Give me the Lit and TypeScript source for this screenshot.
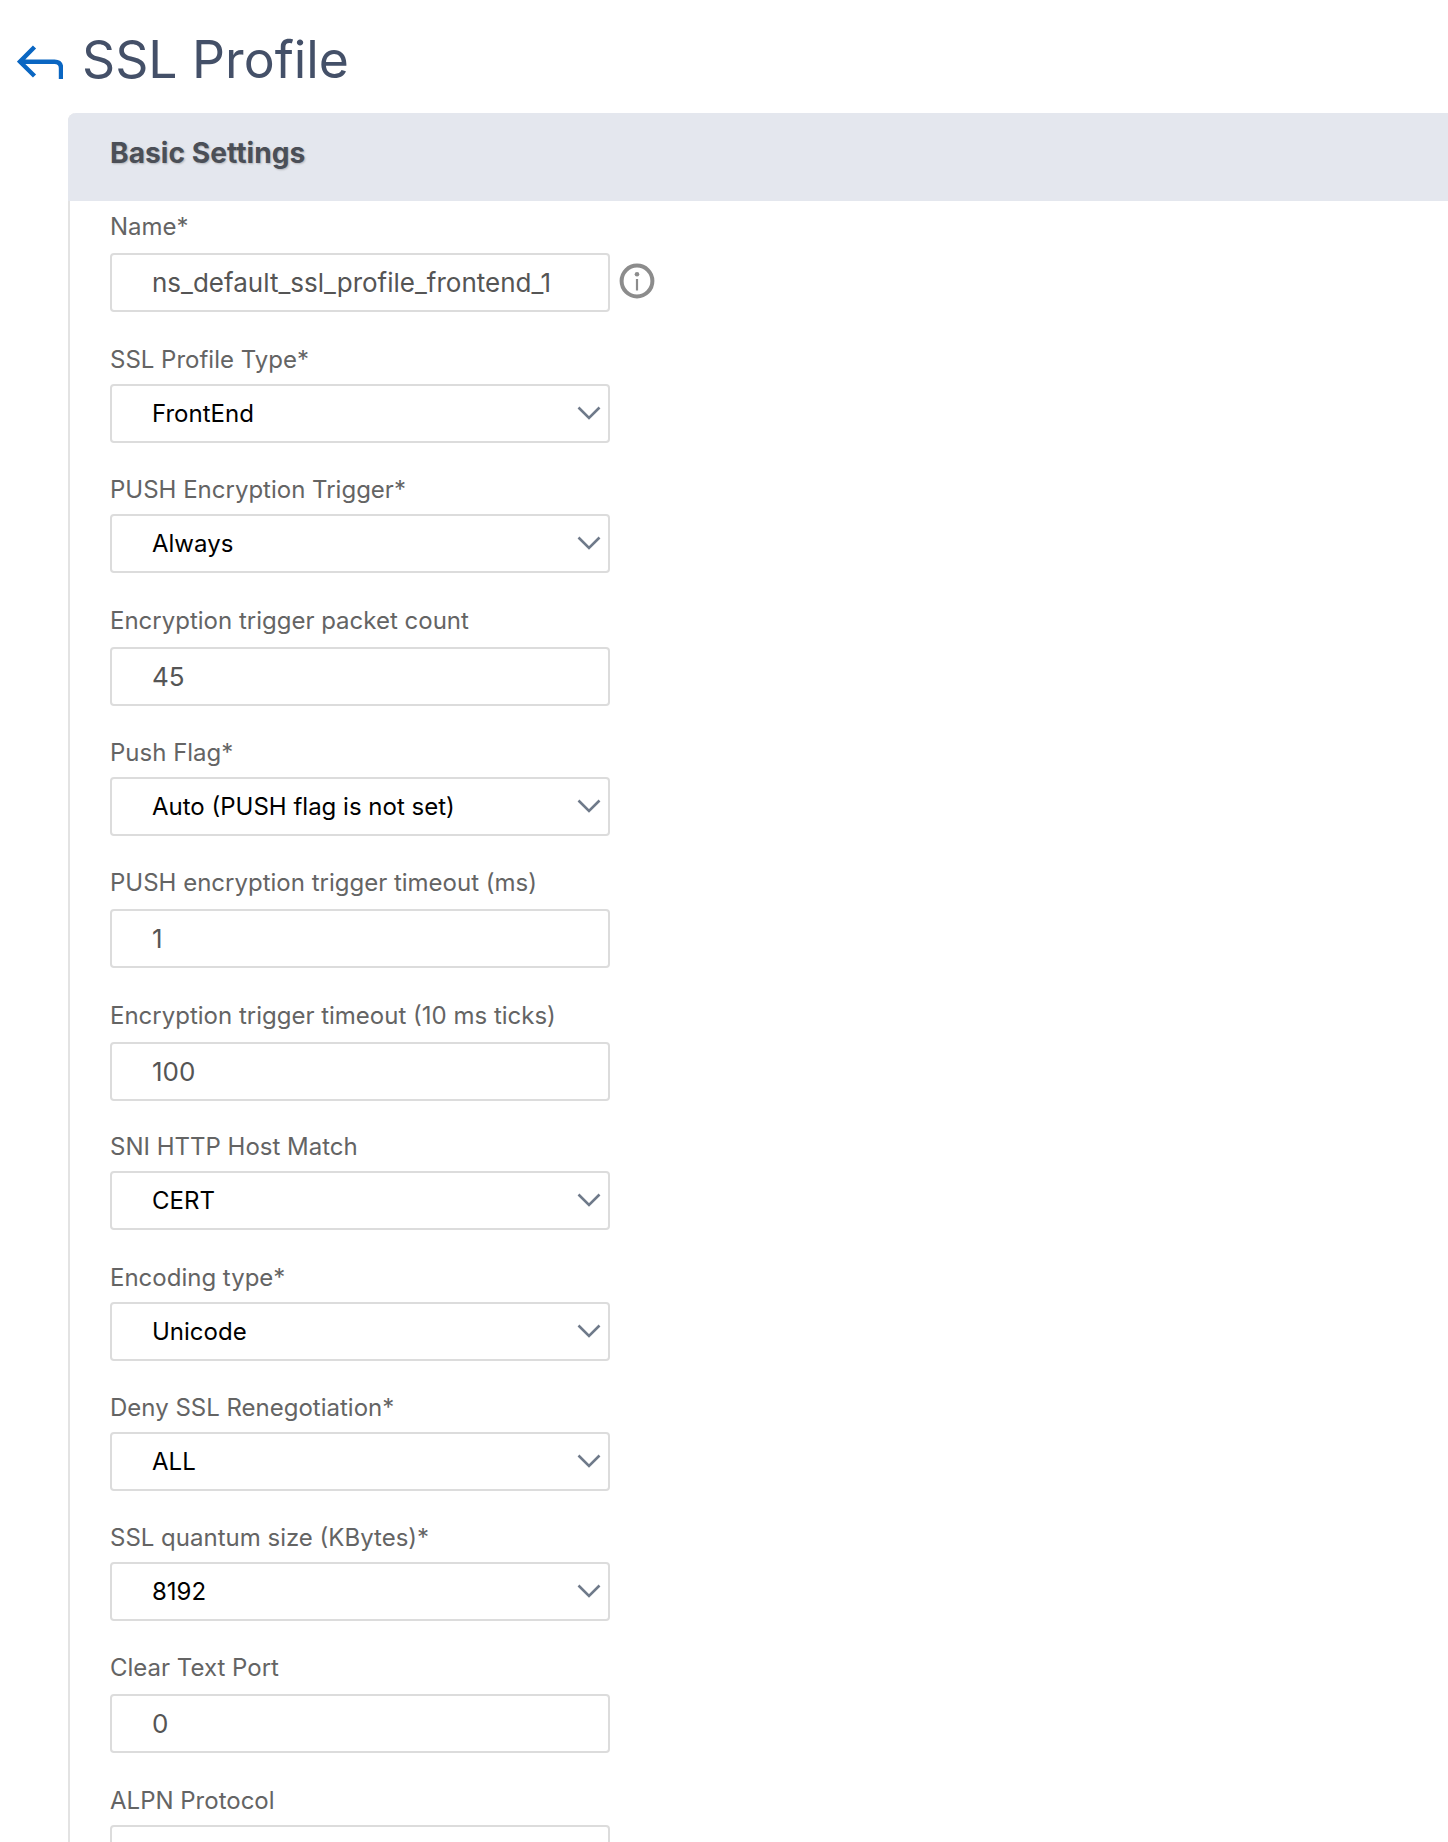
import { LitElement, html, css, svg } from "lit";
import { customElement } from "lit/decorators.js";

type Field = { label: string; value: string; kind: "input" | "select"; gap: number; info?: boolean };

const FIELDS: Field[] = [
  { label: "Name*", value: "ns_default_ssl_profile_frontend_1", kind: "input", gap: 0, info: true },
  { label: "SSL Profile Type*", value: "FrontEnd", kind: "select", gap: 32 },
  { label: "PUSH Encryption Trigger*", value: "Always", kind: "select", gap: 31 },
  { label: "Encryption trigger packet count", value: "45", kind: "input", gap: 32 },
  { label: "Push Flag*", value: "Auto (PUSH flag is not set)", kind: "select", gap: 31 },
  { label: "PUSH encryption trigger timeout (ms)", value: "1", kind: "input", gap: 31 },
  { label: "Encryption trigger timeout (10 ms ticks)", value: "100", kind: "input", gap: 32 },
  { label: "SNI HTTP Host Match", value: "CERT", kind: "select", gap: 30 },
  { label: "Encoding type*", value: "Unicode", kind: "select", gap: 32 },
  { label: "Deny SSL Renegotiation*", value: "ALL", kind: "select", gap: 31 },
  { label: "SSL quantum size (KBytes)*", value: "8192", kind: "select", gap: 31 },
  { label: "Clear Text Port", value: "0", kind: "input", gap: 31 },
  { label: "ALPN Protocol", value: "", kind: "select", gap: 32 },
];

const chevron = svg`<svg class="chev" viewBox="0 0 24 14" width="24" height="14" fill="none"><path d="M1.5 1.5 12 12 22.5 1.5" stroke="#6f7a8a" stroke-width="2.6"/></svg>`;

const info = svg`<svg class="info" viewBox="0 0 36 36" width="36" height="36" fill="none"><circle cx="18" cy="18" r="15.4" stroke="#8c8c8c" stroke-width="4"/><circle cx="18" cy="11.2" r="2.3" fill="#8c8c8c"/><path d="M18 16v11.5" stroke="#8c8c8c" stroke-width="2.2"/></svg>`;

const back = svg`<svg class="back" viewBox="0 0 46 34" width="46" height="34" fill="none"><path d="M17.5 2 3 16.7 17.5 31M3 16.7h34.5Q44 16.7 44 23v11.5" stroke="#0a66c2" stroke-width="4.4"/></svg>`;

@customElement("app-root")
export class AppRoot extends LitElement {
  static styles = css`
    :host {
      display: block;
      height: 1842px;
      overflow: hidden;
      background: #fff;
      font-family: Inter, "Liberation Sans", sans-serif;
    }
    .head {
      display: flex;
      align-items: center;
      height: 113px;
      padding: 4px 0 0 17px;
      box-sizing: border-box;
    }
    .back {
      flex: none;
      margin: 6px 0 0 0;
    }
    h1 {
      margin: 0 0 0 19px;
      font-size: 51.7px;
      font-weight: 400;
      line-height: 64px;
      color: #445068;
    }
    .card {
      margin-left: 68px;
      border-left: 2px solid #e3e3e3;
      border-top-left-radius: 8px;
    }
    .card-title {
      margin-left: -2px;
      height: 88px;
      box-sizing: border-box;
      padding: 0 0 8px 42px;
      display: flex;
      align-items: center;
      background: #e4e7ee;
      border-top-left-radius: 8px;
      font-size: 28.2px;
      font-weight: 700;
      color: #4b4f57;
      text-shadow: 1px 1px 2px rgba(0, 0, 0, 0.22);
    }
    .body {
      padding: 10px 0 0 40px;
    }
    .field {
      display: flex;
      flex-direction: column;
    }
    label {
      font-size: 24px;
      line-height: 32px;
      color: #646464;
    }
    .row {
      display: flex;
      align-items: center;
      gap: 9px;
    }
    .select-f .ctl {
      margin-top: 8px;
      font-size: 24px;
      color: #000;
    }
    .input-f .ctl {
      margin-top: 10px;
      font-size: 26px;
      color: #555;
    }
    .ctl {
      position: relative;
      box-sizing: border-box;
      width: 500px;
      height: 59px;
      padding-left: 40px;
      display: flex;
      align-items: center;
      border: 2px solid #dcdcdc;
      border-radius: 4px;
      background: #fff;
      white-space: nowrap;
    }
    .chev {
      position: absolute;
      right: 7px;
      top: 20px;
    }
    .info {
      flex: none;
      margin-top: 6px;
    }
  `;

  render() {
    return html`
      <div class="head">${back}<h1>SSL Profile</h1></div>
      <section class="card">
        <div class="card-title">Basic Settings</div>
        <div class="body">
          ${FIELDS.map(
            (f) => html`
              <div class="field ${f.kind}-f" style="margin-top:${f.gap}px">
                <label>${f.label}</label>
                <div class="row">
                  <div class="ctl">${f.value}${f.kind === "select" ? chevron : ""}</div>
                  ${f.info ? info : ""}
                </div>
              </div>
            `
          )}
        </div>
      </section>
    `;
  }
}
